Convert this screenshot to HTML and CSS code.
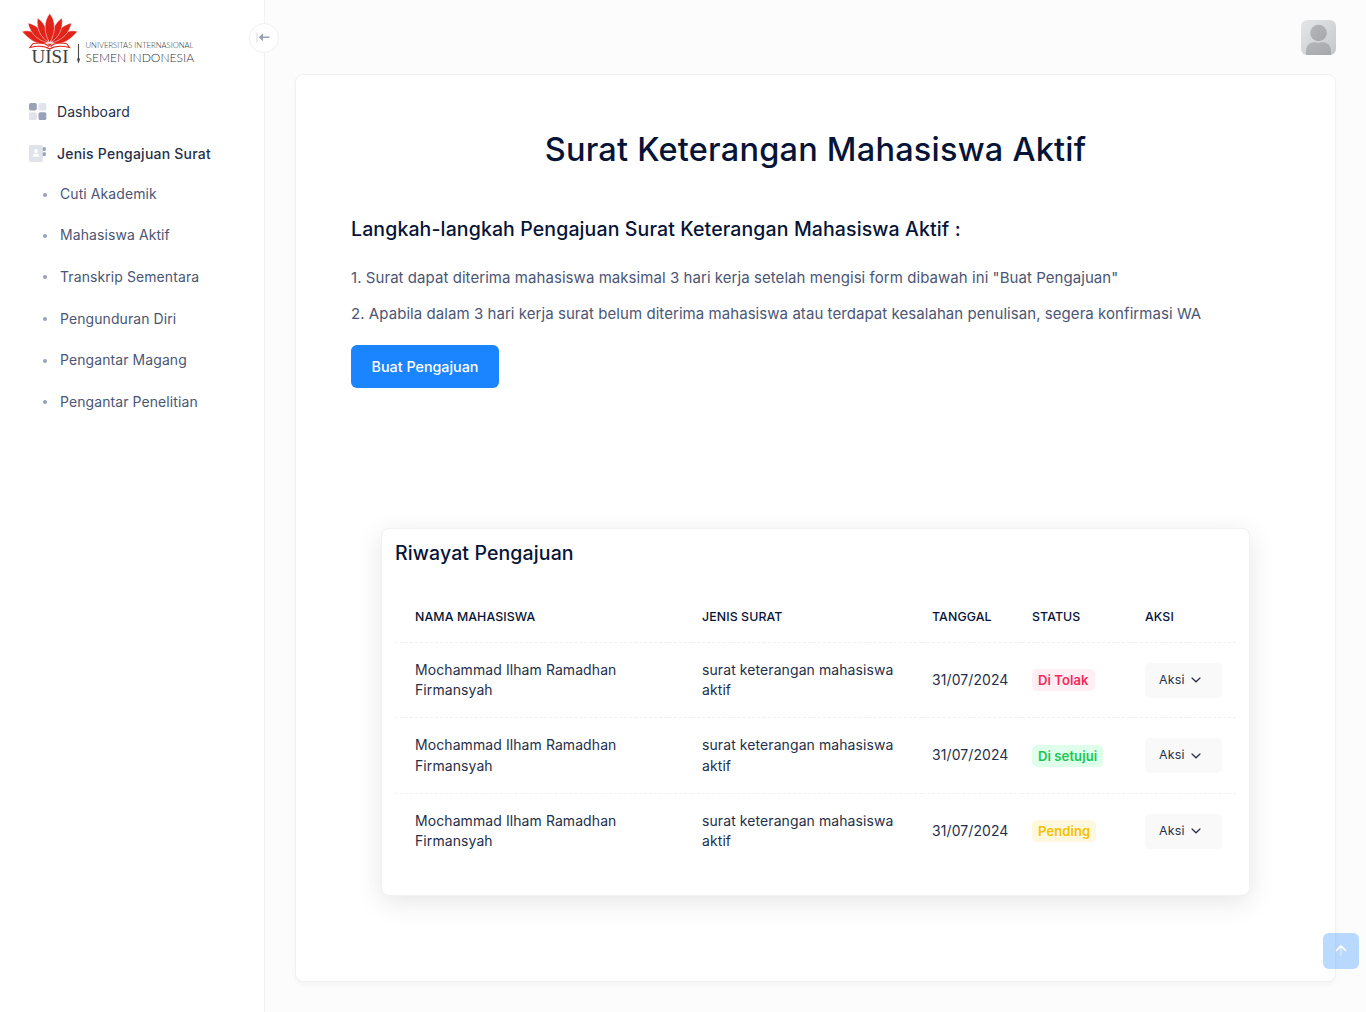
FILE: index.html
```html
<!DOCTYPE html>
<html lang="id">
<head>
<meta charset="utf-8">
<title>Surat Keterangan Mahasiswa Aktif</title>
<link rel="stylesheet" href="styles.css">
</head>
<body>
<div class="app">
  <aside class="sidebar">
    <div class="logo">
      <svg class="logo-svg" viewBox="0 0 180 54" width="180" height="54">
        <g fill="#e2231a" stroke="#fff" stroke-width=".5">
          <path d="M2 19.500C9 17 22 21 27 31.500C15 33 9 27 2 19.500Z"/>
          <path d="M57.500 19.500C50.500 17 37.500 21 32.500 31.500C44.500 33 50.500 27 57.500 19.500Z"/>
          <path d="M8 11C17 13 25 20 28 31C17 28 10 21 8 11Z"/>
          <path d="M51.500 11C42.500 13 34.500 20 31.500 31C42.500 28 49.500 21 51.500 11Z"/>
          <path d="M17.500 6C25 11 29 20 29 30.500C20 25 16 16 17.500 6Z"/>
          <path d="M42 6C34.500 11 30.500 20 30.500 30.500C39.500 25 43.500 16 42 6Z"/>
          <path d="M29.750 1.500C23.500 9 23.500 20 29.750 31C36 20 36 9 29.750 1.500Z"/>
          <path d="M27 31.500H32.500L29.750 34.500Z"/>
        </g>
        <g fill="none" stroke="#e2231a" stroke-width="1.1">
          <path d="M13 31.500Q24 29.500 29 34.500M46.500 31.500Q35.500 29.500 30.500 34.500"/>
          <path d="M13 31.500L10 35.500Q23 32.500 29.750 37Q36.500 32.500 49.500 35.500L46.500 31.500"/>
        </g>
        <text x="11.500" y="51" class="logo-uisi" textLength="37" lengthAdjust="spacingAndGlyphs">UISI</text>
        <path d="M58.500 32V50" stroke="#4b4b4b" stroke-width="1.100"/>
        <path d="M56.800 46.500H60.200L58.500 51.500Z" fill="#4b4b4b"/>
        <text x="65.500" y="36" class="logo-small">UNIVERSITAS INTERNASIONAL</text>
        <text x="65.500" y="49.500" class="logo-big">SEMEN INDONESIA</text>
      </svg>
    </div>
    <button class="toggle" aria-label="Menu">
      <svg width="16" height="16" viewBox="0 0 16 16"><path d="M1 2.500V12.500" stroke="#dfe2ec" stroke-width="1.300"/><path d="M2.800 7.300L7 3.300V6.600H13.500V8H7V11.300Z" fill="#99a1b7"/></svg>
    </button>
    <nav class="menu">
      <a class="item"><svg width="18" height="18" viewBox="0 0 18 18"><g fill="#99a1b7"><rect x="0" y="0" width="7.800" height="7.500" rx="1.700"/><rect x="9.500" y="9.300" width="7.800" height="7.800" rx="1.700"/></g><g fill="#e1e3ea"><rect x="9.500" y="0" width="7.800" height="7.500" rx="1.700"/><rect x="0" y="9.300" width="7.800" height="7.800" rx="1.700"/></g></svg>Dashboard</a>
      <a class="item open"><svg width="18" height="18" viewBox="0 0 18 18"><rect x="0" y="0" width="14" height="17" rx="2" fill="#e1e3ea"/><circle cx="7" cy="6" r="1.900" fill="#fff"/><path d="M3.500 11.800Q4 8.700 7 8.700T10.500 11.800Z" fill="#fff"/><rect x="13.800" y="2.200" width="3" height="3.800" rx="1" fill="#99a1b7"/><rect x="13.800" y="7.300" width="3" height="3.800" rx="1" fill="#99a1b7"/></svg>Jenis Pengajuan Surat</a>
      <a class="sub">Cuti Akademik</a>
      <a class="sub">Mahasiswa Aktif</a>
      <a class="sub">Transkrip Sementara</a>
      <a class="sub">Pengunduran Diri</a>
      <a class="sub">Pengantar Magang</a>
      <a class="sub">Pengantar Penelitian</a>
    </nav>
  </aside>
  <div class="page">
    <header class="topbar">
      <svg class="avatar" width="35" height="35" viewBox="0 0 35 35">
        <defs><linearGradient id="bg" x1="0" y1="0" x2="1" y2="1"><stop offset="0" stop-color="#e5e6e8"/><stop offset="1" stop-color="#c6c7ca"/></linearGradient><linearGradient id="fg" x1="0" y1="0" x2="1" y2="1"><stop offset="0" stop-color="#b5b6b9"/><stop offset="1" stop-color="#a6a7aa"/></linearGradient></defs>
        <rect width="35" height="35" fill="url(#bg)"/>
        <path d="M5 35V32Q5 22 14 22Q17.500 23.500 21 22Q30 22 30 32V35Z" fill="url(#fg)"/>
        <circle cx="17.500" cy="13" r="8.300" fill="url(#fg)"/>
      </svg>
    </header>
    <main class="card">
      <h1>Surat Keterangan Mahasiswa Aktif</h1>
      <h2>Langkah-langkah Pengajuan Surat Keterangan Mahasiswa Aktif :</h2>
      <p>1. Surat dapat diterima mahasiswa maksimal 3 hari kerja setelah mengisi form dibawah ini "Buat Pengajuan"</p>
      <p>2. Apabila dalam 3 hari kerja surat belum diterima mahasiswa atau terdapat kesalahan penulisan, segera konfirmasi WA</p>
      <button class="primary">Buat Pengajuan</button>
      <section class="history">
        <h3>Riwayat Pengajuan</h3>
        <table>
          <colgroup><col class="c-name"><col class="c-type"><col class="c-date"><col class="c-status"><col class="c-action"></colgroup>
          <thead><tr><th>Nama Mahasiswa</th><th>Jenis Surat</th><th>Tanggal</th><th>Status</th><th>Aksi</th></tr></thead>
          <tbody>
            <tr><td>Mochammad Ilham Ramadhan Firmansyah</td><td>surat keterangan mahasiswa aktif</td><td>31/07/2024</td><td><span class="badge danger">Di Tolak</span></td><td><button class="action">Aksi<svg width="10" height="6" viewBox="0 0 10 6"><path d="M1 1L5 4.800L9 1" fill="none" stroke="#252f4a" stroke-width="1.200" stroke-linecap="round"/></svg></button></td></tr>
            <tr><td>Mochammad Ilham Ramadhan Firmansyah</td><td>surat keterangan mahasiswa aktif</td><td>31/07/2024</td><td><span class="badge success">Di setujui</span></td><td><button class="action">Aksi<svg width="10" height="6" viewBox="0 0 10 6"><path d="M1 1L5 4.800L9 1" fill="none" stroke="#252f4a" stroke-width="1.200" stroke-linecap="round"/></svg></button></td></tr>
            <tr><td>Mochammad Ilham Ramadhan Firmansyah</td><td>surat keterangan mahasiswa aktif</td><td>31/07/2024</td><td><span class="badge warning">Pending</span></td><td><button class="action">Aksi<svg width="10" height="6" viewBox="0 0 10 6"><path d="M1 1L5 4.800L9 1" fill="none" stroke="#252f4a" stroke-width="1.200" stroke-linecap="round"/></svg></button></td></tr>
          </tbody>
        </table>
      </section>
    </main>
  </div>
</div>
<button class="to-top" aria-label="Ke atas"><svg width="14" height="14" viewBox="0 0 14 14" fill="none" stroke="#fff" stroke-width="1.800" stroke-linecap="round" stroke-linejoin="round"><path d="M7 3V11" opacity=".4"/><path d="M2.500 6.300L7 1.800L11.500 6.300"/></svg></button>
</body>
</html>
```
FILE: styles.css
```css
* { box-sizing: border-box; }
body { margin: 0; background: #fcfcfc; color: #252f4a; font-family: Inter, "Liberation Sans", sans-serif; font-size: 13px; line-height: 1.5; }
h1, h2, h3, p { margin: 0; }
button { font: inherit; border: 0; padding: 0; }
.app { display: flex; height: 1012px; overflow: hidden; }
.sidebar { position: relative; flex: none; width: 265px; background: #fff; border-right: 1px solid #f1f1f2; }
.logo { height: 91px; padding: 12px 0 0 20px; }
.logo-svg { display: block; overflow: visible; }
.logo-uisi { font: 19px "Liberation Serif", serif; fill: #3f3f3f; }
.logo-small { font: 300 7.700px Lato, sans-serif; fill: #333; }
.logo-big { font: 300 12.100px Lato, sans-serif; fill: #333; }
.toggle { position: absolute; left: 249px; top: 23px; width: 30px; height: 30px; display: flex; align-items: center; justify-content: center; border: 1px solid #f1f1f2; border-radius: 50%; background: #fff; }
.item { display: flex; align-items: center; height: 42px; padding-left: 29px; gap: 10px; font-size: 13.975px; letter-spacing: .09px; color: #252f4a; }
.open { font-weight: 500; letter-spacing: .24px; }
.sub { display: flex; align-items: center; height: 41.6px; padding-left: 43px; gap: 13px; font-size: 13.975px; letter-spacing: .1px; color: #4b5675; }
.sub::before { content: ""; width: 4px; height: 4px; border-radius: 50%; background: #99a1b7; }
.open + .sub { height: 40px; padding-bottom: 1px; }
.page { flex: 1; padding: 0 30px; }
.topbar { display: flex; justify-content: flex-end; align-items: center; height: 74px; }
.avatar { border-radius: 6px; }
.card { height: 908px; padding: 49px 55px 0; background: #fff; border: 1px solid #f1f1f2; border-radius: 8px; box-shadow: 0 3px 4px rgba(0,0,0,.03); color: #071437; }
h1 { text-align: center; font-size: 32.500px; line-height: 51px; letter-spacing: .22px; font-weight: 500; white-space: nowrap; }
h2 { margin-top: 39px; font-size: 19.500px; line-height: 30px; letter-spacing: .12px; font-weight: 500; white-space: nowrap; }
p { font-size: 15px; line-height: 22px; margin-top: 14px; letter-spacing: .058px; color: #4b5675; white-space: nowrap; }
h2 + p { margin-top: 23px; }
.primary { display: block; width: 148px; height: 43px; margin-top: 20px; border-radius: 6px; background: #1b84ff; color: #fff; font-size: 14.300px; font-weight: 500; }
.history { width: 869px; height: 368px; margin: 140px 0 0 30px; padding: 10px 13px; background: #fff; border: 1px solid #f1f1f2; border-radius: 8px; box-shadow: 0 6px 26px rgba(0,0,0,.1); }
h3 { font-size: 19.500px; line-height: 28px; letter-spacing: .12px; font-weight: 500; }
table { width: 841px; margin-top: 23px; border-collapse: collapse; table-layout: fixed; }
.c-name { width: 297px; }
.c-type { width: 230px; }
.c-date { width: 100px; }
.c-status { width: 113px; }
.c-action { width: 101px; }
th { height: 52.500px; padding: 3px 10px 0; border-bottom: 1px dashed #f1f1f2; text-align: left; font-size: 12.350px; letter-spacing: .1px; font-weight: 500; text-transform: uppercase; white-space: nowrap; }
td { height: 75.400px; padding: 0 10px; border-bottom: 1px dashed #f1f1f2; font-size: 13.975px; line-height: 20.500px; letter-spacing: .1px; color: #252f4a; vertical-align: middle; }
th:first-child { padding-left: 20px; }
td:first-child { padding: 0 60px 0 20px; }
tr:last-child td { border-bottom: 0; }
.badge { display: inline-block; height: 22px; padding: 0 6px; border-radius: 5px; font-size: 13px; line-height: 22px; font-weight: 600; }
.danger { background: #ffeef3; color: #f8285a; }
.success { background: #dfffea; color: #17c653; }
.warning { background: #fff8dd; color: #f6c000; }
.action { display: flex; align-items: center; gap: 6px; width: 77px; height: 35px; padding-left: 14px; border-radius: 5px; background: #f9f9f9; color: #252f4a; font-size: 12.350px; letter-spacing: .2px; }
.to-top { position: fixed; left: 1323px; top: 933px; width: 36px; height: 36px; display: flex; align-items: center; justify-content: center; border-radius: 6px; background: #1b84ff; opacity: .3; }
```
